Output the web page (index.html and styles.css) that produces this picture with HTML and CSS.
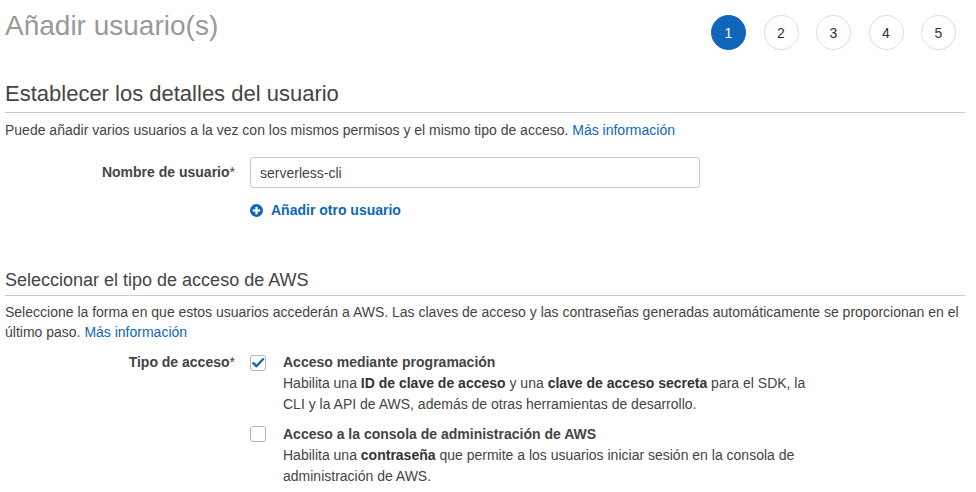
FILE: index.html
```html
<!DOCTYPE html>
<html lang="es">
<head>
<meta charset="utf-8">
<title>Añadir usuario(s)</title>
<link rel="stylesheet" href="styles.css">
</head>
<body>
<div class="page">
  <header class="header">
    <h1 class="title">Añadir usuario(s)</h1>
    <ol class="steps">
      <li class="step active">1</li>
      <li class="step">2</li>
      <li class="step">3</li>
      <li class="step">4</li>
      <li class="step">5</li>
    </ol>
  </header>

  <section class="section first">
    <h2 class="section-title big">Establecer los detalles del usuario</h2>
    <p class="intro">Puede añadir varios usuarios a la vez con los mismos permisos y el mismo tipo de acceso. <a class="link" href="#">Más información</a></p>
    <div class="form-grid">
      <label class="label tall">Nombre de usuario<span class="req">*</span></label>
      <input class="input" type="text" value="serverless-cli">
      <span></span>
      <a class="add-link" href="#">
        <svg class="plus" width="13" height="13" viewBox="0 0 13 13" aria-hidden="true">
          <circle cx="6.5" cy="6.5" r="6.5" fill="#1166bb"/>
          <rect x="5.4" y="2.8" width="2.2" height="7.4" fill="#fff"/>
          <rect x="2.8" y="5.4" width="7.4" height="2.2" fill="#fff"/>
        </svg>
        <span>Añadir otro usuario</span>
      </a>
    </div>
  </section>

  <section class="section second">
    <h2 class="section-title small">Seleccionar el tipo de acceso de AWS</h2>
    <p class="intro alt">Seleccione la forma en que estos usuarios accederán a AWS. Las claves de acceso y las contraseñas generadas automáticamente se proporcionan en el último paso. <a class="link" href="#">Más información</a></p>
    <div class="form-grid access">
      <div class="label opt">Tipo de acceso<span class="req">*</span></div>
      <div class="options">
        <div class="option">
          <span class="checkbox">
            <svg width="16" height="16" viewBox="0 0 16 16" aria-hidden="true">
              <path d="M3.4 8.2 L6.4 11.2 L13 4.2" fill="none" stroke="#1166bb" stroke-width="2.4" stroke-linecap="round" stroke-linejoin="round"/>
            </svg>
          </span>
          <div class="opt-text">
            <div class="opt-title">Acceso mediante programación</div>
            <div class="opt-desc">Habilita una <b>ID de clave de acceso</b> y una <b>clave de acceso secreta</b> para el SDK, la CLI y la API de AWS, además de otras herramientas de desarrollo.</div>
          </div>
        </div>
        <div class="option">
          <span class="checkbox"></span>
          <div class="opt-text">
            <div class="opt-title">Acceso a la consola de administración de AWS</div>
            <div class="opt-desc">Habilita una <b>contraseña</b> que permite a los usuarios iniciar sesión en la consola de administración de AWS.</div>
          </div>
        </div>
      </div>
    </div>
  </section>
</div>
</body>
</html>
```

FILE: styles.css
```css
html, body {
  margin: 0;
  padding: 0;
  background: #fff;
}

body {
  font-family: "Liberation Sans", Arial, sans-serif;
  font-size: 14px;
  color: #444;
}

.page {
  padding: 10px 11px 0 5px;
}

.header {
  display: flex;
  justify-content: space-between;
  align-items: flex-start;
}

.title {
  margin: 0;
  font-size: 28px;
  line-height: 32px;
  font-weight: normal;
  color: #999;
}

.steps {
  display: flex;
  gap: 17.5px;
  list-style: none;
  margin: 5px 9px 0 0;
  padding: 0;
}

.step {
  width: 35px;
  height: 35px;
  box-sizing: border-box;
  border: 1px solid #ddd;
  border-radius: 50%;
  display: flex;
  align-items: center;
  justify-content: center;
  font-size: 14px;
  color: #333;
  background: #fff;
}

.step.active {
  background: #1166bb;
  border-color: #1166bb;
  color: #fff;
}

.section.first {
  margin-top: 31px;
}

.section.second {
  margin-top: 49px;
}

.section-title {
  margin: 0;
  font-weight: normal;
  color: #444;
  border-bottom: 1px solid #ccc;
}

.section-title.big {
  font-size: 22px;
  line-height: 26px;
  padding-bottom: 5px;
}

.section-title.small {
  font-size: 18px;
  line-height: 22px;
  padding-bottom: 4px;
}

.intro {
  margin: 7px 0 0;
  line-height: 20px;
}

.intro.alt {
  margin-top: 6px;
}

.link {
  color: #1166bb;
  text-decoration: none;
}

.form-grid {
  display: grid;
  grid-template-columns: 230px 1fr;
  column-gap: 15px;
  row-gap: 12px;
  margin-top: 17px;
  align-items: start;
}

.form-grid.access {
  margin-top: 10px;
}

.label {
  text-align: right;
  font-weight: bold;
  color: #444;
}

.label.tall {
  line-height: 31px;
}

.label.opt {
  line-height: 21px;
}

.req {
  font-weight: normal;
}

.input {
  width: 450px;
  height: 31px;
  box-sizing: border-box;
  border: 1px solid #c8c8c8;
  border-radius: 3px;
  padding: 0 9px;
  font-family: "Liberation Sans", Arial, sans-serif;
  font-size: 14px;
  color: #444;
  outline: none;
}

.add-link {
  display: inline-flex;
  align-items: center;
  gap: 8px;
  line-height: 20px;
  font-weight: bold;
  color: #1166bb;
  text-decoration: none;
  justify-self: start;
}

.plus {
  display: block;
  margin-top: 1px;
}

.options {
  display: flex;
  flex-direction: column;
  gap: 8.5px;
}

.option {
  display: flex;
  align-items: flex-start;
  gap: 17px;
}

.checkbox {
  flex: none;
  width: 16px;
  height: 16px;
  box-sizing: border-box;
  border: 1px solid #b5b5b5;
  border-radius: 3px;
  margin-top: 2.5px;
  background: #fff;
  position: relative;
}

.checkbox svg {
  position: absolute;
  left: -1px;
  top: -1px;
}

.opt-text {
  width: 535px;
  line-height: 21px;
}

.opt-title {
  font-weight: bold;
  color: #444;
}

.opt-desc b {
  color: #333;
}
```
